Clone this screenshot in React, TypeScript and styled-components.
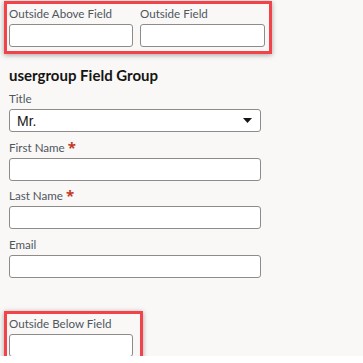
import React from "react";
import styled, { createGlobalStyle } from "styled-components";

const Global = createGlobalStyle`
  html, body { margin: 0; padding: 0; background: #ffffff; }
  body { font-family: Lato, "Noto Sans", sans-serif; }
  * { box-sizing: border-box; }
`;

const Page = styled.div`
  background: #f9f8f6;
  height: 356px;
  width: 363px;
  padding-top: 1px;
  display: flex;
  flex-direction: column;
`;

const Highlight = styled.div<{ $w: number }>`
  margin-left: 4px;
  width: ${(p) => p.$w}px;
  border: 3px solid #f2434a;
  box-shadow: 0 1px 5px rgba(0, 0, 0, 0.35);
  padding: 2px 4px 4px 2px;
  display: flex;
  gap: 7px;
`;

const Field = styled.div<{ $w: number }>`
  width: ${(p) => p.$w}px;
  display: flex;
  flex-direction: column;
`;

const Label = styled.label`
  font-size: 11.6px;
  line-height: 16px;
  height: 18px;
  color: #4f565e;
  display: flex;
  align-items: flex-start;
  gap: 3px;
`;

const Star = styled.span`
  font-family: "Noto Sans", sans-serif;
  color: #c33a26;
  font-size: 15px;
  font-weight: 700;
  line-height: 14px;
`;

const Input = styled.div`
  height: 23px;
  background: #ffffff;
  border: 1px solid #8d8c8a;
  border-radius: 3px;
`;

const Select = styled(Input)`
  display: flex;
  align-items: center;
  justify-content: space-between;
  padding: 0 8px 0 7px;
  font-family: "Liberation Sans", Arial, sans-serif;
  font-size: 14px;
  color: #161513;
`;

const Group = styled.div`
  margin-left: 9px;
  width: 252px;
  display: flex;
  flex-direction: column;
`;

const Heading = styled.h2`
  margin: 11px 0 6px;
  font-size: 15px;
  line-height: 20px;
  font-weight: 700;
  color: #161513;
`;

const Row = styled.div<{ $gap?: number }>`
  display: flex;
  flex-direction: column;
  margin-bottom: ${(p) => p.$gap ?? 7}px;
`;

const Bottom = styled(Highlight)`
  margin-top: 26px;
`;

const Caret = () => (
  <svg width="9" height="5" viewBox="0 0 9 5">
    <path d="M0 0 H9 L4.5 5 Z" fill="#161513" />
  </svg>
);

export default function App() {
  return (
    <>
      <Global />
      <Page>
        <Highlight $w={268}>
          <Field $w={124}>
            <Label>Outside Above Field</Label>
            <Input />
          </Field>
          <Field $w={125}>
            <Label>Outside Field</Label>
            <Input />
          </Field>
        </Highlight>
        <Group>
          <Heading>usergroup Field Group</Heading>
          <Row $gap={8}>
            <Label>Title</Label>
            <Select>
              <span>Mr.</span>
              <Caret />
            </Select>
          </Row>
          <Row>
            <Label>
              First Name<Star>*</Star>
            </Label>
            <Input />
          </Row>
          <Row $gap={8}>
            <Label>
              Last Name<Star>*</Star>
            </Label>
            <Input />
          </Row>
          <Row>
            <Label>Email</Label>
            <Input />
          </Row>
        </Group>
        <Bottom $w={139}>
          <Field $w={124}>
            <Label>Outside Below Field</Label>
            <Input />
          </Field>
        </Bottom>
      </Page>
    </>
  );
}
